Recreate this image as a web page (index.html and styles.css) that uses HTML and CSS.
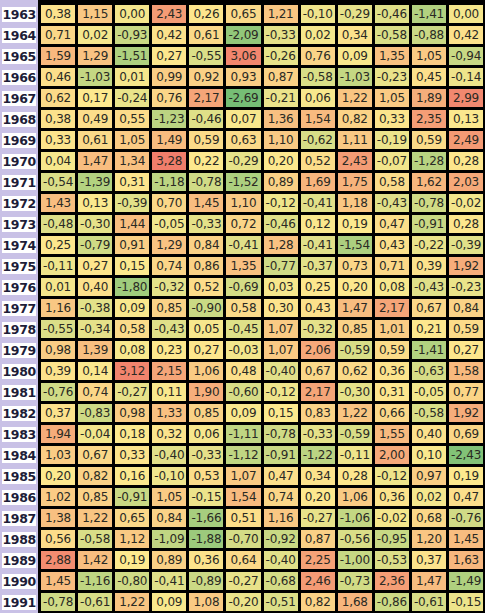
FILE: index.html
```html
<!DOCTYPE html>
<html lang="en">
<head>
    <meta charset="UTF-8">
    <meta name="viewport" content="width=device-width, initial-scale=1.0">
    <title>Anomalies 1963-1991</title>
    <link rel="stylesheet" href="styles.css">
</head>
<body>
    <div class="sheet">
        <div class="years" id="years"></div>
        <div class="grid" id="grid"></div>
    </div>
    <script src="script.js"></script>
</body>
</html>
```

FILE: styles.css
```css
/* Base */
body {
    margin: 0;
    background: #000;
    font-family: 'DejaVu Sans', Verdana, sans-serif;
    overflow: hidden;
}

.sheet {
    display: flex;
    align-items: flex-start;
}

/* Year column */
.years {
    width: 38px;
    flex: none;
    padding-top: 4px;
    background: #c9c1e6;
}

.year {
    height: 21px;
    line-height: 21px;
    text-align: right;
    padding-right: 2px;
    font-size: 12.5px;
    font-weight: bold;
    color: #1d1d38;
    letter-spacing: -0.3px;
}

.year span {
    background: #fff;
}

/* Value grid */
.grid {
    display: grid;
    grid-template-columns: repeat(12, 34.1px);
    grid-auto-rows: 18px;
    gap: 3px;
    padding: 5px 0 3px 3px;
    background: #000;
}

.cell {
    display: flex;
    align-items: center;
    justify-content: center;
    font-size: 12px;
    color: #2a2a24;
    letter-spacing: -0.2px;
}
```

FILE: script.js
```js
const data = {
    1963: [0.38, 1.15, 0.00, 2.43, 0.26, 0.65, 1.21, -0.10, -0.29, -0.46, -1.41, 0.00],
    1964: [0.71, 0.02, -0.93, 0.42, 0.61, -2.09, -0.33, 0.02, 0.34, -0.58, -0.88, 0.42],
    1965: [1.59, 1.29, -1.51, 0.27, -0.55, 3.06, -0.26, 0.76, 0.09, 1.35, 1.05, -0.94],
    1966: [0.46, -1.03, 0.01, 0.99, 0.92, 0.93, 0.87, -0.58, -1.03, -0.23, 0.45, -0.14],
    1967: [0.62, 0.17, -0.24, 0.76, 2.17, -2.69, -0.21, 0.06, 1.22, 1.05, 1.89, 2.99],
    1968: [0.38, 0.49, 0.55, -1.23, -0.46, 0.07, 1.36, 1.54, 0.82, 0.33, 2.35, 0.13],
    1969: [0.33, 0.61, 1.05, 1.49, 0.59, 0.63, 1.10, -0.62, 1.11, -0.19, 0.59, 2.49],
    1970: [0.04, 1.47, 1.34, 3.28, 0.22, -0.29, 0.20, 0.52, 2.43, -0.07, -1.28, 0.28],
    1971: [-0.54, -1.39, 0.31, -1.18, -0.78, -1.52, 0.89, 1.69, 1.75, 0.58, 1.62, 2.03],
    1972: [1.43, 0.13, -0.39, 0.70, 1.45, 1.10, -0.12, -0.41, 1.18, -0.43, -0.78, -0.02],
    1973: [-0.48, -0.30, 1.44, -0.05, -0.33, 0.72, -0.46, 0.12, 0.19, 0.47, -0.91, 0.28],
    1974: [0.25, -0.79, 0.91, 1.29, 0.84, -0.41, 1.28, -0.41, -1.54, 0.43, -0.22, -0.39],
    1975: [-0.11, 0.27, 0.15, 0.74, 0.86, 1.35, -0.77, -0.37, 0.73, 0.71, 0.39, 1.92],
    1976: [0.01, 0.40, -1.80, -0.32, 0.52, -0.69, 0.03, 0.25, 0.20, 0.08, -0.43, -0.23],
    1977: [1.16, -0.38, 0.09, 0.85, -0.90, 0.58, 0.30, 0.43, 1.47, 2.17, 0.67, 0.84],
    1978: [-0.55, -0.34, 0.58, -0.43, 0.05, -0.45, 1.07, -0.32, 0.85, 1.01, 0.21, 0.59],
    1979: [0.98, 1.39, 0.08, 0.23, 0.27, -0.03, 1.07, 2.06, -0.59, 0.59, -1.41, 0.27],
    1980: [0.39, 0.14, 3.12, 2.15, 1.06, 0.48, -0.40, 0.67, 0.62, 0.36, -0.63, 1.58],
    1981: [-0.76, 0.74, -0.27, 0.11, 1.90, -0.60, -0.12, 2.17, -0.30, 0.31, -0.05, 0.77],
    1982: [0.37, -0.83, 0.98, 1.33, 0.85, 0.09, 0.15, 0.83, 1.22, 0.66, -0.58, 1.92],
    1983: [1.94, -0.04, 0.18, 0.32, 0.06, -1.11, -0.78, -0.33, -0.59, 1.55, 0.40, 0.69],
    1984: [1.03, 0.67, 0.33, -0.40, -0.33, -1.12, -0.91, -1.22, -0.11, 2.00, 0.10, -2.43],
    1985: [0.20, 0.82, 0.16, -0.10, 0.53, 1.07, 0.47, 0.34, 0.28, -0.12, 0.97, 0.19],
    1986: [1.02, 0.85, -0.91, 1.05, -0.15, 1.54, 0.74, 0.20, 1.06, 0.36, 0.02, 0.47],
    1987: [1.38, 1.22, 0.65, 0.84, -1.66, 0.51, 1.16, -0.27, -1.06, -0.02, 0.68, -0.76],
    1988: [0.56, -0.58, 1.12, -1.09, -1.88, -0.70, -0.92, 0.87, -0.56, -0.95, 1.20, 1.45],
    1989: [2.88, 1.42, 0.19, 0.89, 0.36, 0.64, -0.40, 2.25, -1.00, -0.53, 0.37, 1.63],
    1990: [1.45, -1.16, -0.80, -0.41, -0.89, -0.27, -0.68, 2.46, -0.73, 2.36, 1.47, -1.49],
    1991: [-0.78, -0.61, 1.22, 0.09, 1.08, -0.20, -0.51, 0.82, 1.68, -0.86, -0.61, -0.15]
};

// green - cream - salmon scale, like a spreadsheet's conditional format
const LOW = [104, 186, 114];
const MID = [253, 233, 142];
const HIGH = [240, 116, 104];

const all = Object.values(data).flat();
const min = Math.min(...all) - 0.3;
const max = Math.max(...all) + 0.3;
const sorted = [...all].sort((a, b) => a - b);
const mid = sorted[Math.floor(sorted.length / 2)] - 0.1;

function mix(a, b, t) {
    t = Math.max(0, Math.min(1, t));
    return a.map((v, i) => Math.round(v + (b[i] - v) * t));
}

function colorFor(v) {
    const rgb = v < mid
        ? mix(MID, LOW, (mid - v) / (mid - min))
        : mix(MID, HIGH, (v - mid) / (max - mid));
    return `rgb(${rgb.join(',')})`;
}

const years = document.getElementById('years');
const grid = document.getElementById('grid');

Object.keys(data).forEach(year => {
    const label = document.createElement('div');
    label.className = 'year';
    label.innerHTML = `<span>${year}</span>`;
    years.appendChild(label);

    data[year].forEach(v => {
        const cell = document.createElement('div');
        cell.className = 'cell';
        cell.style.background = colorFor(v);
        cell.textContent = v.toFixed(2).replace('.', ',');
        grid.appendChild(cell);
    });
});
```
